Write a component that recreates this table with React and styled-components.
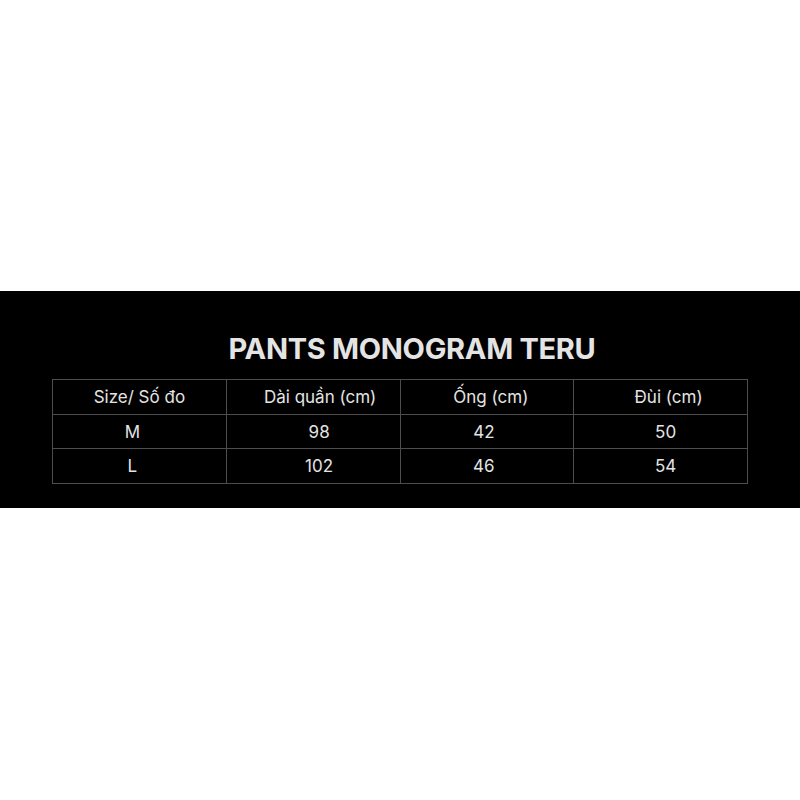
import React from "react";
import styled, { createGlobalStyle } from "styled-components";

const Global = createGlobalStyle`
  html, body { margin: 0; padding: 0; background: #fff; }
  body { font-family: Inter, "Noto Sans", sans-serif; }
`;

const Page = styled.div`
  height: 800px;
  display: flex;
  align-items: center;
`;

const Band = styled.section`
  width: 100%;
  height: 217px;
  margin-top: -1px;
  box-sizing: border-box;
  background: #000;
  padding: 0 52px;
  display: flex;
  flex-direction: column;
`;

const Title = styled.h1`
  margin: 0;
  padding-top: 41px;
  padding-left: 24px;
  height: 88px;
  box-sizing: border-box;
  text-align: center;
  font-size: 29px;
  line-height: 34px;
  font-weight: 700;
  color: #e4e4e4;
  letter-spacing: -0.3px;
`;

const Table = styled.table`
  width: 696px;
  border-collapse: collapse;
  table-layout: fixed;
`;

const Cell = styled.td`
  border: 1px solid #4d4d4d;
  height: 33.7px;
  padding: 0 ${(p) => Math.max(0, -2 * p.$shift)}px 0 ${(p) => Math.max(0, 2 * p.$shift)}px;
  text-align: center;
  font-size: 17px;
  color: #e4e4e4;
  font-weight: 400;
`;

const headShift = [0, 7, 4, 8];
const bodyShift = [-7, 6, -3, 5];

const rows = [
  ["Size/ Số đo", "Dài quần (cm)", "Ống (cm)", "Đùi (cm)"],
  ["M", "98", "42", "50"],
  ["L", "102", "46", "54"],
];

export default function App() {
  return (
    <>
      <Global />
      <Page>
        <Band>
          <Title>PANTS MONOGRAM TERU</Title>
          <Table>
            <tbody>
              {rows.map((r, i) => (
                <tr key={i}>
                  {r.map((c, j) => (
                    <Cell key={j} $shift={i === 0 ? headShift[j] : bodyShift[j]}>
                      {c}
                    </Cell>
                  ))}
                </tr>
              ))}
            </tbody>
          </Table>
        </Band>
      </Page>
    </>
  );
}
